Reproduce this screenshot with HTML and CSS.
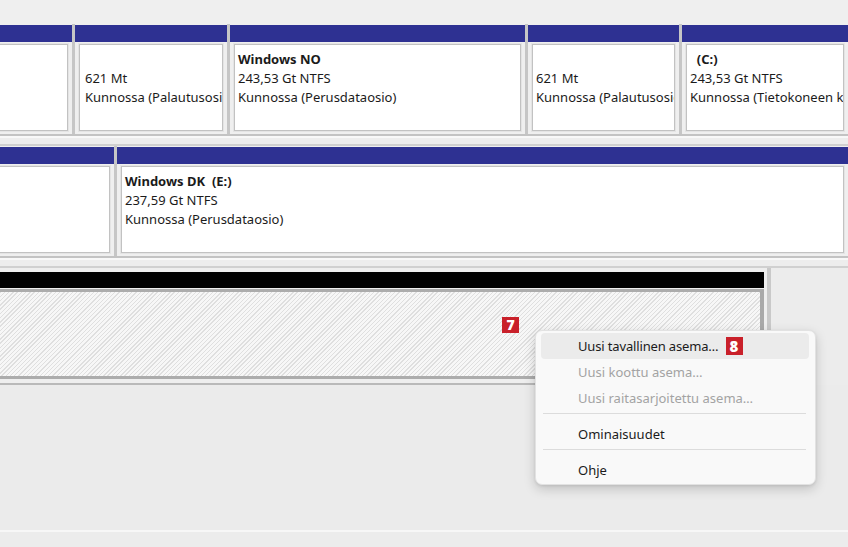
FILE: index.html
```html
<!DOCTYPE html>
<html lang="fi">
<head>
<meta charset="utf-8">
<link rel="stylesheet" href="styles.css">
</head>
<body>
<div class="screen">
  <div class="top"></div>

  <div class="disk disk-a">
    <div class="part w1"><div class="bar"></div><div class="box first"></div></div>
    <div class="part w2"><div class="bar"></div><div class="box">
      <div class="line">&nbsp;</div><div class="line">621 Mt</div><div class="line">Kunnossa (Palautusosio)</div>
    </div></div>
    <div class="part w3"><div class="bar"></div><div class="box">
      <div class="line b">Windows NO</div><div class="line">243,53 Gt NTFS</div><div class="line">Kunnossa (Perusdataosio)</div>
    </div></div>
    <div class="part w4"><div class="bar"></div><div class="box">
      <div class="line">&nbsp;</div><div class="line">621 Mt</div><div class="line">Kunnossa (Palautusosio)</div>
    </div></div>
    <div class="part grow"><div class="bar"></div><div class="box">
      <div class="line b pre">  (C:)</div><div class="line">243,53 Gt NTFS</div><div class="line">Kunnossa (Tietokoneen käynnistysosio)</div>
    </div></div>
  </div>
  <div class="gap"></div>

  <div class="disk disk-b">
    <div class="part w5"><div class="bar"></div><div class="box first"></div></div>
    <div class="part grow"><div class="bar"></div><div class="box">
      <div class="line b pre">Windows DK  (E:)</div><div class="line">237,59 Gt NTFS</div><div class="line">Kunnossa (Perusdataosio)</div>
    </div></div>
  </div>
  <div class="gap"></div>

  <div class="disk3">
    <div class="part3">
      <div class="blackbar"></div>
      <div class="hatch"></div>
    </div>
  </div>

  <div class="filler"></div>
  <div class="bottom"></div>

  <span class="badge badge7">7</span>

  <div class="menu">
    <div class="item hover"><span class="tight">Uusi tavallinen asema…</span><span class="badge badge8">8</span></div>
    <div class="item dis">Uusi koottu asema…</div>
    <div class="item dis">Uusi raitasarjoitettu asema…</div>
    <div class="sep"></div>
    <div class="item">Ominaisuudet</div>
    <div class="sep"></div>
    <div class="item">Ohje</div>
  </div>
</div>
</body>
</html>
```

FILE: styles.css
```css
* { box-sizing: border-box; }
html, body { margin: 0; padding: 0; }
body {
  background: #ececec;
  font-family: "Noto Sans", "Open Sans", sans-serif;
  color: #1b1b1b;
}
.screen {
  position: relative;
  width: 848px;
  height: 547px;
  overflow: hidden;
  display: flex;
  flex-direction: column;
  background: #ececec;
}
.top { height: 24px; background: #efefef; flex: none; }

.disk {
  display: flex;
  height: 112px;
  flex: none;
  border-bottom: 2px solid #c3c3c3;
  background: #efefef;
}
.part {
  display: flex;
  flex-direction: column;
  border-right: 3px solid #c6c6c6;
  padding: 1px 0 3px;
  flex: none;
  min-width: 0;
}
.part.grow { flex: 1; border-right: none; }
.w1 { width: 75px; }
.w2 { width: 155px; }
.w3 { width: 298px; }
.w4 { width: 154px; }
.w5 { width: 117px; }

.bar { height: 17px; background: #2e3192; flex: none; }
.box {
  flex: 1;
  margin: 2px 4px 0;
  background: #fff;
  border: 1px solid #c2c2c2;
  box-shadow: 0 0 0 1px #e4e4e4;
  padding: 5px 3px 0;
  overflow: hidden;
  font-size: 13px;
  min-width: 0;
}
.part.w2 .box { padding-left: 5px; }
.box.first { margin-left: -4px; }
.line { line-height: 19px; white-space: nowrap; }
.b { font-weight: 700; }
.pre { white-space: pre; }

.gap {
  height: 10px;
  flex: none;
  border-top: 2px solid #f8f8f8;
  border-bottom: 2px solid #d0d0d0;
  background: #ededed;
}

.disk3 { display: flex; flex: none; }
.part3 {
  width: 771px;
  padding: 4px 3px 4px 0;
  border-right: 4px solid #c9c9c9;
  border-bottom: 2px solid #b9b9b9;
  background: #eeeeee;
}
.blackbar { height: 16px; background: #000; }
.hatch {
  margin-top: 1px;
  height: 90px;
  border-top: 3px solid #acacac;
  border-bottom: 3px solid #acacac;
  border-right: 4px solid #a9a9a9;
  background: repeating-linear-gradient(135deg, #dfdfdf 0 1px, #f7f7f7 1px 3px);
}

.filler { flex: 1; background: #ebebeb; }
.bottom {
  height: 17px;
  flex: none;
  border-top: 2px solid #f7f7f7;
  background: #ececec;
}

.badge {
  display: inline-flex;
  align-items: center;
  justify-content: center;
  background: #c9202a;
  color: #fff;
  font-family: "Open Sans", "Noto Sans", sans-serif;
  font-weight: 800;
}
.badge7 {
  position: absolute;
  left: 502px;
  top: 317px;
  width: 17px;
  height: 16px;
  font-size: 14px;
  line-height: 1;
}
.badge8 {
  width: 17px;
  height: 18px;
  font-size: 15px;
  line-height: 1;
  margin-left: 7px;
}

.menu {
  position: absolute;
  left: 535px;
  top: 330px;
  width: 281px;
  height: 155px;
  background: #f9f9f9;
  border: 1px solid #e2e2e2;
  border-radius: 7px;
  box-shadow: 0 4px 12px rgba(0, 0, 0, 0.18), 0 1px 3px rgba(0,0,0,0.08);
  padding: 2px 6px 2px 5px;
  font-size: 13px;
}
.item {
  height: 26px;
  display: flex;
  align-items: center;
  padding-left: 37px;
  border-radius: 4px;
  color: #1b1b1b;
}
.tight { letter-spacing: -0.15px; }
.item.hover { background: #ebebeb; }
.item.dis { color: #a3a3a3; }
.sep {
  height: 10px;
  padding-top: 2px;
}
.sep::before {
  content: "";
  display: block;
  height: 1px;
  margin: 0 3px 0 2px;
  background: #dcdcdc;
}
```
